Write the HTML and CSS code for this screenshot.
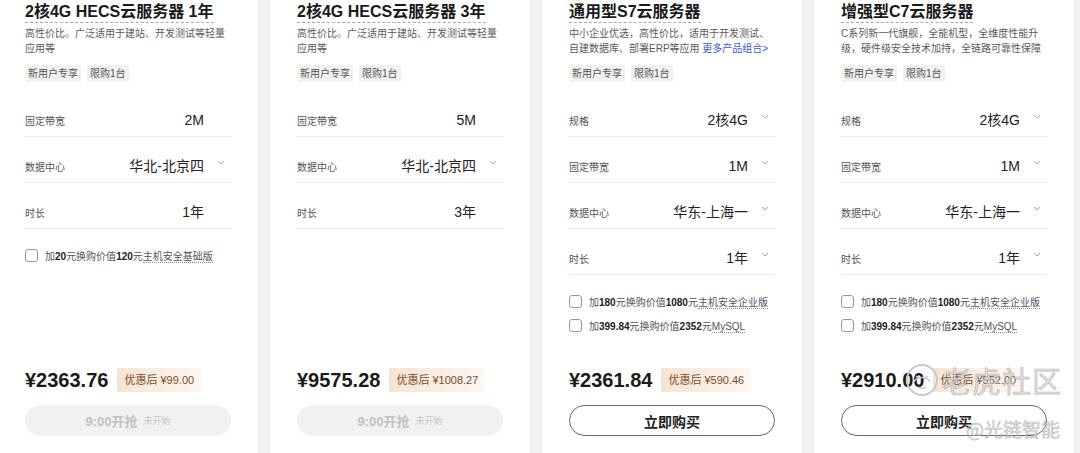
FILE: index.html
```html
<!DOCTYPE html>
<html lang="zh-CN">
<head>
<meta charset="utf-8">
<title>云服务器</title>
<link rel="stylesheet" href="styles.css">
</head>
<body>
<div class="cards">
  <section class="card">
    <h2 class="title"><span>2核4G HECS云服务器 1年</span></h2>
    <p class="desc">高性价比。广泛适用于建站、开发测试等轻量应用等</p>
    <div class="tags"><span class="tag">新用户专享</span><span class="tag">限购1台</span></div>
    <div class="rows">
      <div class="row"><span class="label">固定带宽</span><span class="value">2M</span><span class="chev"></span></div>
      <div class="row"><span class="label">数据中心</span><span class="value">华北-北京四</span><span class="chev"><svg width="8" height="5" viewBox="0 0 8 5"><path d="M1 1l3 3 3-3" fill="none" stroke="#aaa" stroke-width="1"/></svg></span></div>
      <div class="row"><span class="label">时长</span><span class="value">1年</span><span class="chev"></span></div>
    </div>
    <div class="checks">
      <label class="check"><span class="box"></span><span>加<b>20</b>元换购价值<b>120</b>元<u>主机安全基础版</u></span></label>
    </div>
    <div class="bottom">
      <div class="price-line"><span class="price">¥2363.76</span><span class="badge">优惠后 ¥99.00</span></div>
      <div class="btn disabled"><b>9:00开抢</b><small>未开始</small></div>
    </div>
  </section>

  <section class="card">
    <h2 class="title"><span>2核4G HECS云服务器 3年</span></h2>
    <p class="desc">高性价比。广泛适用于建站、开发测试等轻量应用等</p>
    <div class="tags"><span class="tag">新用户专享</span><span class="tag">限购1台</span></div>
    <div class="rows">
      <div class="row"><span class="label">固定带宽</span><span class="value">5M</span><span class="chev"></span></div>
      <div class="row"><span class="label">数据中心</span><span class="value">华北-北京四</span><span class="chev"><svg width="8" height="5" viewBox="0 0 8 5"><path d="M1 1l3 3 3-3" fill="none" stroke="#aaa" stroke-width="1"/></svg></span></div>
      <div class="row"><span class="label">时长</span><span class="value">3年</span><span class="chev"></span></div>
    </div>
    <div class="bottom">
      <div class="price-line"><span class="price">¥9575.28</span><span class="badge">优惠后 ¥1008.27</span></div>
      <div class="btn disabled"><b>9:00开抢</b><small>未开始</small></div>
    </div>
  </section>

  <section class="card">
    <h2 class="title"><span>通用型S7云服务器</span></h2>
    <p class="desc">中小企业优选，高性价比，适用于开发测试、自建数据库、部署ERP等应用 <a class="more">更多产品组合&gt;</a></p>
    <div class="tags"><span class="tag">新用户专享</span><span class="tag">限购1台</span></div>
    <div class="rows">
      <div class="row"><span class="label">规格</span><span class="value">2核4G</span><span class="chev"><svg width="8" height="5" viewBox="0 0 8 5"><path d="M1 1l3 3 3-3" fill="none" stroke="#aaa" stroke-width="1"/></svg></span></div>
      <div class="row"><span class="label">固定带宽</span><span class="value">1M</span><span class="chev"><svg width="8" height="5" viewBox="0 0 8 5"><path d="M1 1l3 3 3-3" fill="none" stroke="#aaa" stroke-width="1"/></svg></span></div>
      <div class="row"><span class="label">数据中心</span><span class="value">华东-上海一</span><span class="chev"><svg width="8" height="5" viewBox="0 0 8 5"><path d="M1 1l3 3 3-3" fill="none" stroke="#aaa" stroke-width="1"/></svg></span></div>
      <div class="row"><span class="label">时长</span><span class="value">1年</span><span class="chev"><svg width="8" height="5" viewBox="0 0 8 5"><path d="M1 1l3 3 3-3" fill="none" stroke="#aaa" stroke-width="1"/></svg></span></div>
    </div>
    <div class="checks">
      <label class="check"><span class="box"></span><span>加<b>180</b>元换购价值<b>1080</b>元<u>主机安全企业版</u></span></label>
      <label class="check"><span class="box"></span><span>加<b>399.84</b>元换购价值<b>2352</b>元<u>MySQL</u></span></label>
    </div>
    <div class="bottom">
      <div class="price-line"><span class="price">¥2361.84</span><span class="badge">优惠后 ¥590.46</span></div>
      <div class="btn buy">立即购买</div>
    </div>
  </section>

  <section class="card">
    <h2 class="title"><span>增强型C7云服务器</span></h2>
    <p class="desc">C系列新一代旗舰，全能机型，全维度性能升级，硬件级安全技术加持，全链路可靠性保障</p>
    <div class="tags"><span class="tag">新用户专享</span><span class="tag">限购1台</span></div>
    <div class="rows">
      <div class="row"><span class="label">规格</span><span class="value">2核4G</span><span class="chev"><svg width="8" height="5" viewBox="0 0 8 5"><path d="M1 1l3 3 3-3" fill="none" stroke="#aaa" stroke-width="1"/></svg></span></div>
      <div class="row"><span class="label">固定带宽</span><span class="value">1M</span><span class="chev"><svg width="8" height="5" viewBox="0 0 8 5"><path d="M1 1l3 3 3-3" fill="none" stroke="#aaa" stroke-width="1"/></svg></span></div>
      <div class="row"><span class="label">数据中心</span><span class="value">华东-上海一</span><span class="chev"><svg width="8" height="5" viewBox="0 0 8 5"><path d="M1 1l3 3 3-3" fill="none" stroke="#aaa" stroke-width="1"/></svg></span></div>
      <div class="row"><span class="label">时长</span><span class="value">1年</span><span class="chev"><svg width="8" height="5" viewBox="0 0 8 5"><path d="M1 1l3 3 3-3" fill="none" stroke="#aaa" stroke-width="1"/></svg></span></div>
    </div>
    <div class="checks">
      <label class="check"><span class="box"></span><span>加<b>180</b>元换购价值<b>1080</b>元<u>主机安全企业版</u></span></label>
      <label class="check"><span class="box"></span><span>加<b>399.84</b>元换购价值<b>2352</b>元<u>MySQL</u></span></label>
    </div>
    <div class="bottom">
      <div class="price-line"><span class="price">¥2910.00</span><span class="badge">优惠后 ¥552.00</span></div>
      <div class="btn buy">立即购买</div>
    </div>
  </section>
</div>

<div class="watermark">
  <div class="wm-top">
    <svg class="wm-logo" width="36" height="36" viewBox="0 0 36 36"><circle cx="18" cy="18" r="15" fill="none" stroke="#c8c8c8" stroke-width="2"/><path d="M10 20c3-6 13-6 16 0M12 14l3 3M24 14l-3 3M14 25c3 2 5 2 8 0" fill="none" stroke="#c8c8c8" stroke-width="1.6"/></svg>
    <span class="wm-big">老虎社区</span>
  </div>
  <div class="wm-small">@光链智能</div>
</div>
</body>
</html>
```

FILE: styles.css
```css
* { box-sizing: border-box; }

html, body {
  margin: 0;
  padding: 0;
}

body {
  width: 1080px;
  height: 453px;
  overflow: hidden;
  background: #f3f3f3;
  font-family: "Liberation Sans", "Noto Sans CJK SC", sans-serif;
  color: #222;
  position: relative;
}

.cards {
  display: flex;
  gap: 12px;
  margin-left: -2px;
}

.card {
  flex: 0 0 260px;
  height: 453px;
  background: #fff;
  padding: 2px 27px 0;
  display: flex;
  flex-direction: column;
  box-shadow: 0 0 6px rgba(0, 0, 0, 0.04);
}

.title {
  margin: 0;
  font-size: 16px;
  line-height: 20px;
  font-weight: 700;
  color: #1a1a1a;
}

.title span {
  display: inline-block;
  border-bottom: 1px dashed #aaa;
}

.desc {
  margin: 3px 0 0;
  font-size: 10px;
  line-height: 15px;
  height: 30px;
  color: #5a5a5a;
}

.more {
  color: #3b5bd0;
  text-decoration: none;
}

.tags {
  display: flex;
  gap: 6px;
  margin-top: 9px;
}

.tag {
  font-size: 10px;
  line-height: 17px;
  height: 17px;
  padding: 0 3px;
  background: #f1f1f1;
  color: #555;
  border-radius: 2px;
}

.rows {
  margin-top: 9px;
}

.row {
  height: 46px;
  padding-top: 13px;
  border-bottom: 1px solid #ececec;
  display: flex;
  align-items: center;
}

.label {
  flex: 1;
  font-size: 10px;
  color: #555;
}

.value {
  font-size: 14px;
  color: #222;
  line-height: 20px;
}

.chev {
  width: 27px;
  display: flex;
  justify-content: flex-end;
  padding-right: 6px;
  margin-bottom: 8px;
}

.chev svg { display: block; }

.checks {
  margin-top: 14px;
}

.check {
  height: 24px;
  display: flex;
  align-items: center;
  gap: 7px;
  font-size: 10px;
  color: #555;
}

.check b {
  color: #222;
}

.check u {
  text-decoration: none;
  border-bottom: 1px dotted #888;
}

.box {
  width: 13px;
  height: 13px;
  border: 1px solid #999;
  border-radius: 3px;
  flex: 0 0 13px;
}

.bottom {
  margin-top: auto;
  padding-bottom: 17px;
}

.price-line {
  display: flex;
  align-items: center;
  height: 24px;
}

.price {
  font-size: 20px;
  font-weight: 700;
  color: #1a1a1a;
}

.badge {
  margin-left: 9px;
  height: 24px;
  line-height: 24px;
  padding: 0 7px;
  font-size: 11px;
  color: #7a4b2c;
  background: linear-gradient(90deg, #f4e4d4, #fdf7f1);
  border-radius: 2px;
}

.btn {
  margin-top: 13px;
  height: 31px;
  border-radius: 16px;
  display: flex;
  align-items: center;
  justify-content: center;
}

.btn.disabled {
  background: #f1f1f1;
  color: #c2c2c2;
}

.btn.disabled b {
  font-size: 13px;
}

.btn.disabled small {
  font-size: 9px;
  margin-left: 6px;
  color: #c8c8c8;
}

.btn.buy {
  border: 1px solid #666;
  font-size: 14px;
  font-weight: 700;
  color: #222;
  background: #fff;
}

.watermark {
  position: absolute;
  left: 904px;
  top: 362px;
  width: 170px;
  pointer-events: none;
}

.wm-top {
  display: flex;
  align-items: center;
  gap: 2px;
}

.wm-big {
  font-family: "Noto Sans CJK SC", sans-serif;
  font-size: 29px;
  line-height: 36px;
  color: rgba(215, 215, 215, 0.75);
  -webkit-text-stroke: 0.6px rgba(140, 140, 140, 0.6);
  letter-spacing: 1px;
}

.wm-small {
  margin-left: 62px;
  margin-top: 20px;
  font-family: "Noto Sans CJK SC", sans-serif;
  font-size: 19px;
  line-height: 22px;
  color: rgba(215, 215, 215, 0.75);
  -webkit-text-stroke: 0.5px rgba(140, 140, 140, 0.6);
}
```
